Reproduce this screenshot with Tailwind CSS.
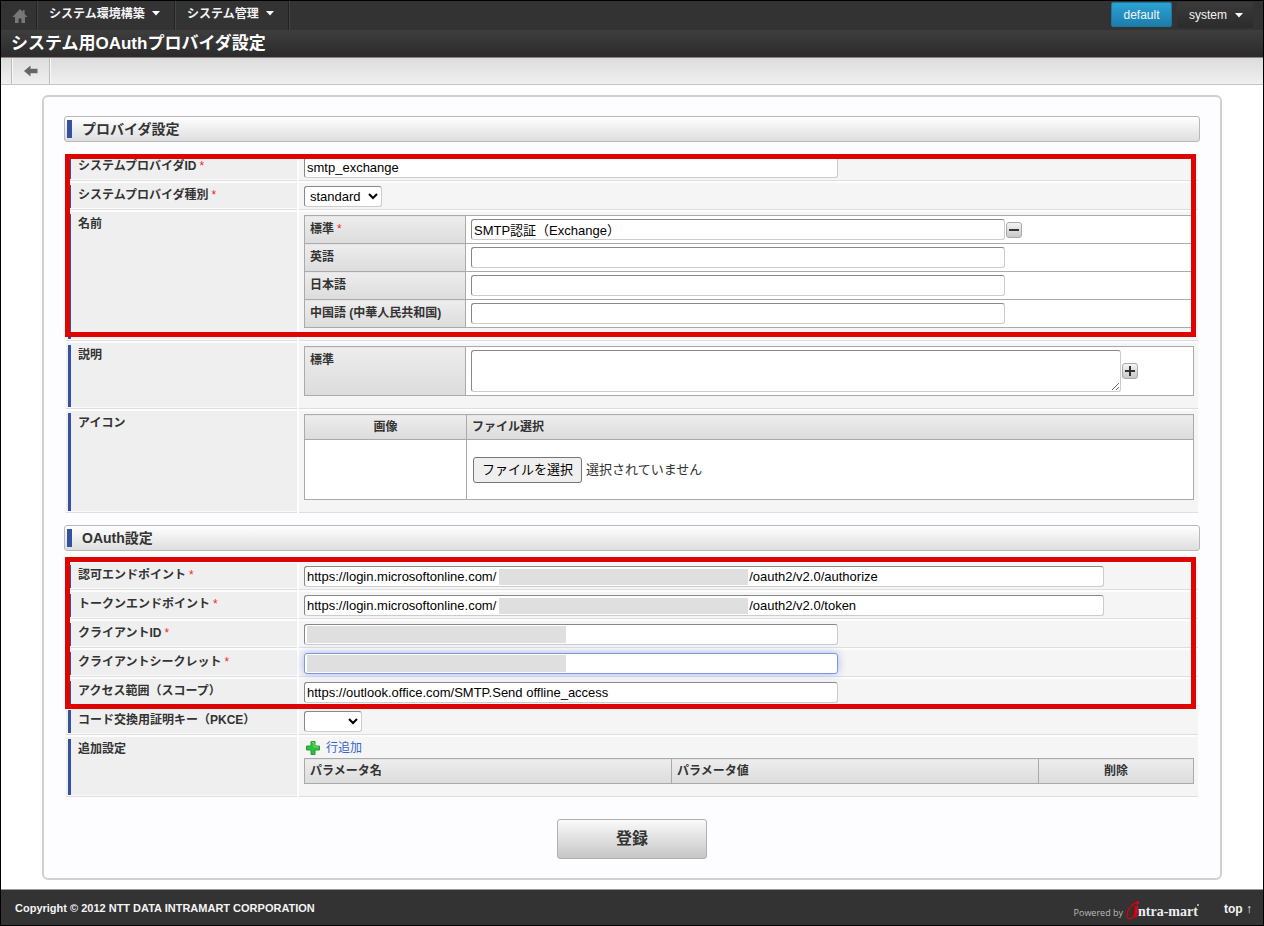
<!DOCTYPE html>
<html lang="ja">
  <head>
    <meta charset="UTF-8" />
    <meta name="viewport" content="width=device-width, initial-scale=1.0" />
    <title>システム用OAuthプロバイダ設定</title>

    <!-- Tailwind CSS -->
    <script src="https://cdn.jsdelivr.net/npm/@tailwindcss/browser@4"></script>
  </head>

  <body class="min-h-screen flex flex-col border border-black bg-white text-[12px] leading-[20px] text-[#333] [font-family:'Liberation_Sans','Noto_Sans_CJK_JP',sans-serif]">
    <!-- Global navigation -->
    <header>
      <nav class="flex h-[29px] bg-[#333] text-[#f4f4f4]">
        <a href="#" aria-label="ホーム" class="w-[36px] flex items-center justify-center border-r border-[#222]">
          <svg width="16" height="16" viewBox="0 0 16 16" fill="#777" class="ml-[3px]">
            <path d="M8 1 L0.5 9 H3 V15 H6.6 V10.5 H9.4 V15 H13 V9 H15.5 L12.6 5.9 V2 H10.8 V4 Z" />
          </svg>
        </a>
        <button type="button" class="w-[138px] flex items-center gap-[7px] pl-[11px] pb-1 font-bold border-l border-r border-l-[#444] border-r-[#222]">
          システム環境構築
          <svg width="8" height="5" viewBox="0 0 8 5" fill="#fff"><path d="M0 0 H8 L4 4.5 Z" /></svg>
        </button>
        <button type="button" class="w-[114px] flex items-center gap-[7px] pl-[11px] pb-1 font-bold border-l border-r border-l-[#444] border-r-[#222]">
          システム管理
          <svg width="8" height="5" viewBox="0 0 8 5" fill="#fff"><path d="M0 0 H8 L4 4.5 Z" /></svg>
        </button>
        <div class="flex-1 border-l border-[#444] flex justify-end gap-[5px] pt-px pr-[10px]">
          <button type="button" class="w-[61px] h-[25px] rounded-[2px] border border-[#1c779f] bg-linear-to-b from-[#2ba3d4] to-[#1b7eab]">default</button>
          <button type="button" class="w-[76px] h-[26px] flex items-center gap-[8px] pl-[12px] rounded-[2px] bg-linear-to-b from-[#3b3b3b] to-[#2b2b2b]">
            system
            <svg width="8" height="5" viewBox="0 0 8 5" fill="#fff"><path d="M0 0 H8 L4 4.5 Z" /></svg>
          </button>
        </div>
      </nav>
      <div class="h-[27px] pl-[10px] bg-linear-to-b from-[#3e3e3e] to-[#2b2b2b]">
        <h1 class="text-[17px] leading-[28px] font-bold text-white">システム用OAuthプロバイダ設定</h1>
      </div>
      <div class="h-[28px] flex pl-[10px] border-t border-b border-t-[#8c8484] border-b-[#c4c4c4] bg-linear-to-b from-[#dcdcdc] to-[#f0f0f0]">
        <a href="#" aria-label="戻る" class="w-[39px] flex items-center justify-center border-l border-r border-[#bbb] shadow-[inset_1px_0_#f8f8f8,1px_0_#f8f8f8]">
          <svg width="14" height="12" viewBox="0 0 14 12" fill="#666"><path d="M0 6 L6.5 0.5 V3.8 H13.5 V8.2 H6.5 V11.5 Z" /></svg>
        </a>
      </div>
    </header>

    <!-- Main form -->
    <main class="flex-1 mx-[41px] mt-[10px] mb-[9px]">
      <form class="rounded-[6px] border-2 border-[#d0d0d0] bg-[#fdfdff] px-[20px] py-[19px]">
        <h2 class="h-[26px] flex items-center gap-[10px] pl-[2px] rounded-[3px] border border-[#b8b8b8] bg-linear-to-b from-white to-[#dedede] text-[14px] font-bold">
          <span class="w-[5px] h-[18px] bg-[#3551a1]"></span>プロバイダ設定
        </h2>

        <section class="relative mt-[10px] mb-[12px] px-[2px]">
          <div class="flex gap-[2px] pt-[2px]">
            <div class="w-[231px] flex pl-[2px] pt-[2px] bg-[#efefef] border-b border-[#dedede] shadow-[inset_0_-1px_#fafafa]">
              <label for="provider-id" class="border-l-3 border-[#3551a1] pl-[7px] mb-[1px] font-bold">システムプロバイダID<span class="text-[#f22] font-normal ml-[3px]">*</span></label>
            </div>
            <div class="flex-1 min-w-0 pl-[5px] pr-[4px] pt-[3px] pb-[2px] bg-[#f5f5f5] border-b border-[#dedede]">
              <input id="provider-id" type="text" value="smtp_exchange" class="block w-[534px] max-w-full h-[21px] px-[2px] rounded-[3px] border border-t-[#888] border-l-[#888] border-r-[#ccc] border-b-[#ccc] bg-white text-[13px] text-black" />
            </div>
          </div>
          <div class="flex gap-[2px] pt-[2px]">
            <div class="w-[231px] flex pl-[2px] pt-[2px] bg-[#efefef] border-b border-[#dedede] shadow-[inset_0_-1px_#fafafa]">
              <label for="provider-type" class="border-l-3 border-[#3551a1] pl-[7px] mb-[1px] font-bold">システムプロバイダ種別<span class="text-[#f22] font-normal ml-[3px]">*</span></label>
            </div>
            <div class="flex-1 min-w-0 pl-[5px] pr-[4px] pt-[3px] pb-[2px] bg-[#f5f5f5] border-b border-[#dedede]">
              <select id="provider-type" class="block w-[78px] h-[21px] px-px rounded-[3px] border border-t-[#888] border-l-[#888] border-r-[#ccc] border-b-[#ccc] bg-white text-[13px] leading-[16px] text-black">
                <option>standard</option>
              </select>
            </div>
          </div>
          <div class="flex gap-[2px] pt-[2px]">
            <div class="w-[231px] flex pl-[2px] pt-[2px] bg-[#efefef] border-b border-[#dedede] shadow-[inset_0_-1px_#fafafa]">
              <div class="border-l-3 border-[#3551a1] pl-[7px] mb-[1px] font-bold">名前</div>
            </div>
            <div class="flex-1 min-w-0 pl-[5px] pr-[4px] pt-[3px] pb-[12px] bg-[#f5f5f5] border-b border-[#dedede]">
              <table class="w-full table-fixed border-collapse bg-white">
                <colgroup><col class="w-[161px]" /><col /></colgroup>
                <tr>
                  <th class="border border-[#aaa] bg-linear-to-b from-[#ededed] to-[#dcdcdc] px-[5px] pt-[3px] align-top text-left font-bold"><label for="name-std">標準<span class="text-[#f22] font-normal ml-[3px]">*</span></label></th>
                  <td class="border border-[#aaa] px-[5px] py-[3px]">
                    <div class="flex items-center gap-px">
                      <input id="name-std" type="text" value="SMTP認証（Exchange）" class="block w-[534px] max-w-full h-[21px] px-[2px] rounded-[3px] border border-t-[#888] border-l-[#888] border-r-[#ccc] border-b-[#ccc] bg-white text-[13px] text-black" />
                      <button type="button" aria-label="閉じる" class="w-[16px] h-[16px] flex items-center justify-center rounded-[3px] border border-[#aaa] bg-linear-to-b from-[#f4f4f4] to-[#c8c8c8]">
                        <svg width="10" height="10" viewBox="0 0 10 10" fill="#333"><path d="M0 4 H10 V6 H0 Z" /></svg>
                      </button>
                    </div>
                  </td>
                </tr>
                <tr>
                  <th class="border border-[#aaa] bg-linear-to-b from-[#ededed] to-[#dcdcdc] px-[5px] pt-[3px] align-top text-left font-bold"><label for="name-en">英語</label></th>
                  <td class="border border-[#aaa] px-[5px] py-[3px]">
                    <input id="name-en" type="text" class="block w-[534px] max-w-full h-[21px] px-[2px] rounded-[3px] border border-t-[#888] border-l-[#888] border-r-[#ccc] border-b-[#ccc] bg-white text-[13px] text-black" />
                  </td>
                </tr>
                <tr>
                  <th class="border border-[#aaa] bg-linear-to-b from-[#ededed] to-[#dcdcdc] px-[5px] pt-[3px] align-top text-left font-bold"><label for="name-ja">日本語</label></th>
                  <td class="border border-[#aaa] px-[5px] py-[3px]">
                    <input id="name-ja" type="text" class="block w-[534px] max-w-full h-[21px] px-[2px] rounded-[3px] border border-t-[#888] border-l-[#888] border-r-[#ccc] border-b-[#ccc] bg-white text-[13px] text-black" />
                  </td>
                </tr>
                <tr>
                  <th class="border border-[#aaa] bg-linear-to-b from-[#ededed] to-[#dcdcdc] px-[5px] pt-[3px] align-top text-left font-bold"><label for="name-zh">中国語 (中華人民共和国)</label></th>
                  <td class="border border-[#aaa] px-[5px] py-[3px]">
                    <input id="name-zh" type="text" class="block w-[534px] max-w-full h-[21px] px-[2px] rounded-[3px] border border-t-[#888] border-l-[#888] border-r-[#ccc] border-b-[#ccc] bg-white text-[13px] text-black" />
                  </td>
                </tr>
              </table>
            </div>
          </div>
          <div class="flex gap-[2px] pt-[2px]">
            <div class="w-[231px] flex pl-[2px] pt-[2px] bg-[#efefef] border-b border-[#dedede] shadow-[inset_0_-1px_#fafafa]">
              <div class="border-l-3 border-[#3551a1] pl-[7px] mb-[1px] font-bold">説明</div>
            </div>
            <div class="flex-1 min-w-0 pl-[5px] pr-[4px] pt-[3px] pb-[12px] bg-[#f5f5f5] border-b border-[#dedede]">
              <table class="w-full table-fixed border-collapse bg-white">
                <colgroup><col class="w-[161px]" /><col /></colgroup>
                <tr>
                  <th class="border border-[#aaa] bg-linear-to-b from-[#ededed] to-[#dcdcdc] px-[5px] pt-[3px] align-top text-left font-bold"><label for="desc-std">標準</label></th>
                  <td class="border border-[#aaa] px-[5px] py-[3px]">
                    <div class="flex items-center gap-px">
                      <textarea id="desc-std" class="block w-[650px] max-w-full h-[42px] px-[2px] rounded-[3px] border border-t-[#888] border-l-[#888] border-r-[#ccc] border-b-[#ccc] bg-white text-[13px] text-black"></textarea>
                      <button type="button" aria-label="開く" class="w-[16px] h-[16px] flex items-center justify-center rounded-[3px] border border-[#aaa] bg-linear-to-b from-[#f4f4f4] to-[#c8c8c8]">
                        <svg width="10" height="10" viewBox="0 0 10 10" fill="#333"><path d="M4 0 H6 V4 H10 V6 H6 V10 H4 V6 H0 V4 H4 Z" /></svg>
                      </button>
                    </div>
                  </td>
                </tr>
              </table>
            </div>
          </div>
          <div class="flex gap-[2px] pt-[2px]">
            <div class="w-[231px] flex pl-[2px] pt-[2px] bg-[#efefef] border-b border-[#dedede] shadow-[inset_0_-1px_#fafafa]">
              <div class="border-l-3 border-[#3551a1] pl-[7px] mb-[1px] font-bold">アイコン</div>
            </div>
            <div class="flex-1 min-w-0 pl-[5px] pr-[4px] pt-[3px] pb-[12px] bg-[#f5f5f5] border-b border-[#dedede]">
              <table class="w-full table-fixed border-collapse bg-white">
                <colgroup><col class="w-[162px]" /><col /></colgroup>
                <tr class="h-[25px]">
                  <th class="border border-[#aaa] bg-linear-to-b from-[#ededed] to-[#dcdcdc] px-[5px] font-bold">画像</th>
                  <th class="border border-[#aaa] bg-linear-to-b from-[#ededed] to-[#dcdcdc] px-[5px] text-left font-bold">ファイル選択</th>
                </tr>
                <tr class="h-[60px]">
                  <td class="border border-[#aaa]"></td>
                  <td class="border border-[#aaa] px-[6px]">
                    <div class="relative flex items-center gap-[4px] text-[13px]">
                      <input id="icon-file" type="file" class="sr-only" />
                      <label for="icon-file" class="h-[26px] px-[8px] leading-[24px] rounded-[3px] border border-[#767676] bg-[#efefef] text-black">ファイルを選択</label>
                      <span>選択されていません</span>
                    </div>
                  </td>
                </tr>
              </table>
            </div>
          </div>
          <!-- Highlight frame -->
          <div class="absolute left-px right-[4px] top-[2px] h-[183px] border-5 border-[#de0500] pointer-events-none"></div>
        </section>

        <h2 class="h-[26px] flex items-center gap-[10px] pl-[2px] rounded-[3px] border border-[#b8b8b8] bg-linear-to-b from-white to-[#dedede] text-[14px] font-bold">
          <span class="w-[5px] h-[18px] bg-[#3551a1]"></span>OAuth設定
        </h2>

        <section class="relative mt-[10px] px-[2px]">
          <div class="flex gap-[2px] pt-[2px]">
            <div class="w-[231px] flex pl-[2px] pt-[2px] bg-[#efefef] border-b border-[#dedede] shadow-[inset_0_-1px_#fafafa]">
              <label for="auth-endpoint" class="border-l-3 border-[#3551a1] pl-[7px] mb-[1px] font-bold">認可エンドポイント<span class="text-[#f22] font-normal ml-[3px]">*</span></label>
            </div>
            <div class="relative flex-1 min-w-0 pl-[5px] pr-[4px] pt-[3px] pb-[2px] bg-[#f5f5f5] border-b border-[#dedede]">
              <input id="auth-endpoint" type="text" value="https://login.microsoftonline.com/                                                                      /oauth2/v2.0/authorize" class="block w-[800px] max-w-full h-[21px] px-[2px] rounded-[3px] border border-t-[#888] border-l-[#888] border-r-[#ccc] border-b-[#ccc] bg-white text-[13px] text-black" />
              <span class="absolute left-[200px] top-[6px] w-[249px] h-[16px] bg-[#dfdfdf]"></span>
            </div>
          </div>
          <div class="flex gap-[2px] pt-[2px]">
            <div class="w-[231px] flex pl-[2px] pt-[2px] bg-[#efefef] border-b border-[#dedede] shadow-[inset_0_-1px_#fafafa]">
              <label for="token-endpoint" class="border-l-3 border-[#3551a1] pl-[7px] mb-[1px] font-bold">トークンエンドポイント<span class="text-[#f22] font-normal ml-[3px]">*</span></label>
            </div>
            <div class="relative flex-1 min-w-0 pl-[5px] pr-[4px] pt-[3px] pb-[2px] bg-[#f5f5f5] border-b border-[#dedede]">
              <input id="token-endpoint" type="text" value="https://login.microsoftonline.com/                                                                      /oauth2/v2.0/token" class="block w-[800px] max-w-full h-[21px] px-[2px] rounded-[3px] border border-t-[#888] border-l-[#888] border-r-[#ccc] border-b-[#ccc] bg-white text-[13px] text-black" />
              <span class="absolute left-[200px] top-[6px] w-[249px] h-[16px] bg-[#dfdfdf]"></span>
            </div>
          </div>
          <div class="flex gap-[2px] pt-[2px]">
            <div class="w-[231px] flex pl-[2px] pt-[2px] bg-[#efefef] border-b border-[#dedede] shadow-[inset_0_-1px_#fafafa]">
              <label for="client-id" class="border-l-3 border-[#3551a1] pl-[7px] mb-[1px] font-bold">クライアントID<span class="text-[#f22] font-normal ml-[3px]">*</span></label>
            </div>
            <div class="relative flex-1 min-w-0 pl-[5px] pr-[4px] pt-[3px] pb-[2px] bg-[#f5f5f5] border-b border-[#dedede]">
              <input id="client-id" type="text" class="block w-[534px] max-w-full h-[21px] px-[2px] rounded-[3px] border border-t-[#888] border-l-[#888] border-r-[#ccc] border-b-[#ccc] bg-white text-[13px] text-black" />
              <span class="absolute left-[8px] top-[5px] w-[259px] h-[17px] bg-[#dfdfdf]"></span>
            </div>
          </div>
          <div class="flex gap-[2px] pt-[2px]">
            <div class="w-[231px] flex pl-[2px] pt-[2px] bg-[#efefef] border-b border-[#dedede] shadow-[inset_0_-1px_#fafafa]">
              <label for="client-secret" class="border-l-3 border-[#3551a1] pl-[7px] mb-[1px] font-bold">クライアントシークレット<span class="text-[#f22] font-normal ml-[3px]">*</span></label>
            </div>
            <div class="relative flex-1 min-w-0 pl-[5px] pr-[4px] pt-[3px] pb-[2px] bg-[#f5f5f5] border-b border-[#dedede]">
              <input id="client-secret" type="text" class="block w-[534px] max-w-full h-[21px] px-[2px] rounded-[3px] border border-[#7f97e0] shadow-[0_0_8px_#a9b8ea] bg-white text-[13px] text-black" />
              <span class="absolute left-[8px] top-[5px] w-[259px] h-[17px] bg-[#dfdfdf]"></span>
            </div>
          </div>
          <div class="flex gap-[2px] pt-[2px]">
            <div class="w-[231px] flex pl-[2px] pt-[2px] bg-[#efefef] border-b border-[#dedede] shadow-[inset_0_-1px_#fafafa]">
              <label for="scope" class="border-l-3 border-[#3551a1] pl-[7px] mb-[1px] font-bold">アクセス範囲（スコープ）</label>
            </div>
            <div class="flex-1 min-w-0 pl-[5px] pr-[4px] pt-[3px] pb-[2px] bg-[#f5f5f5] border-b border-[#dedede]">
              <input id="scope" type="text" value="https://outlook.office.com/SMTP.Send offline_access" class="block w-[534px] max-w-full h-[21px] px-[2px] rounded-[3px] border border-t-[#888] border-l-[#888] border-r-[#ccc] border-b-[#ccc] bg-white text-[13px] text-black" />
            </div>
          </div>
          <div class="flex gap-[2px] pt-[2px]">
            <div class="w-[231px] flex pl-[2px] pt-[2px] bg-[#efefef] border-b border-[#dedede] shadow-[inset_0_-1px_#fafafa]">
              <label for="pkce" class="border-l-3 border-[#3551a1] pl-[7px] mb-[1px] font-bold">コード交換用証明キー（PKCE）</label>
            </div>
            <div class="flex-1 min-w-0 pl-[5px] pr-[4px] pt-[3px] pb-[2px] bg-[#f5f5f5] border-b border-[#dedede]">
              <select id="pkce" class="block w-[58px] h-[21px] px-px rounded-[3px] border border-t-[#888] border-l-[#888] border-r-[#ccc] border-b-[#ccc] bg-white text-[13px] leading-[16px] text-black">
                <option></option>
              </select>
            </div>
          </div>
          <div class="flex gap-[2px] pt-[2px]">
            <div class="w-[231px] flex pl-[2px] pt-[2px] bg-[#efefef] border-b border-[#dedede] shadow-[inset_0_-1px_#fafafa]">
              <div class="border-l-3 border-[#3551a1] pl-[7px] mb-[1px] font-bold">追加設定</div>
            </div>
            <div class="flex-1 min-w-0 pl-[5px] pr-[4px] pt-px pb-[12px] bg-[#f5f5f5] border-b border-[#dedede]">
              <a href="#" class="flex items-center gap-[6px] pl-[2px] text-[#36c]">
                <svg width="14" height="14" viewBox="0 0 14 14">
                  <path d="M5 0.5 H9 V5 H13.5 V9 H9 V13.5 H5 V9 H0.5 V5 H5 Z" fill="#2fbf3f" stroke="#22a034" stroke-width="1" />
                  <path d="M6 1.5 H8 V6 H12.5" fill="none" stroke="#6fdc78" stroke-width="1" />
                </svg>
                行追加
              </a>
              <table class="w-full table-fixed border-collapse">
                <colgroup><col /><col /><col class="w-[155px]" /></colgroup>
                <tr class="h-[25px]">
                  <th class="border border-[#aaa] bg-linear-to-b from-[#ededed] to-[#dcdcdc] px-[5px] text-left font-bold">パラメータ名</th>
                  <th class="border border-[#aaa] bg-linear-to-b from-[#ededed] to-[#dcdcdc] px-[5px] text-left font-bold">パラメータ値</th>
                  <th class="border border-[#aaa] bg-linear-to-b from-[#ededed] to-[#dcdcdc] px-[5px] font-bold">削除</th>
                </tr>
              </table>
            </div>
          </div>
          <!-- Highlight frame -->
          <div class="absolute left-px right-[4px] -top-[4px] h-[152px] border-5 border-[#de0500] pointer-events-none"></div>
        </section>

        <div class="flex justify-center mt-[22px]">
          <button type="submit" class="w-[150px] h-[40px] rounded-[3px] border border-[#b0b0b0] bg-linear-to-b from-[#fafafa] to-[#c6c6c6] text-[16px] font-bold">登録</button>
        </div>
      </form>
    </main>

    <!-- Footer -->
    <footer class="h-[36px] flex items-center border-t border-[#999] bg-[#333] pl-[14px] pr-[11px] text-[#f4f4f4] font-bold">
      <p class="flex-1 text-[11px]">Copyright © 2012 NTT DATA INTRAMART CORPORATION</p>
      <span class="mt-[10px] text-[9px] leading-[16px] font-normal text-[#bbb] [font-family:'Open_Sans',sans-serif]">Powered by</span>
      <svg width="74" height="34" viewBox="0 0 74 34" class="ml-[3px]">
        <path d="M12 11.5 C6 12 0.5 19 1 25 C1.5 30.5 9.5 27 13 19" fill="none" stroke="#d7000f" stroke-width="1.3" />
        <text x="6" y="26" font-size="23" font-style="italic" font-weight="bold" fill="#d7000f" font-family="Liberation Serif">i</text>
        <text x="12" y="25" font-size="14" font-weight="bold" fill="#eee" font-family="Liberation Serif">ntra-mart</text>
        <circle cx="72" cy="14" r="1" fill="#ccc" />
      </svg>
      <a href="#" class="ml-[24px] pt-[2px]">top ↑</a>
    </footer>
  </body>
</html>
